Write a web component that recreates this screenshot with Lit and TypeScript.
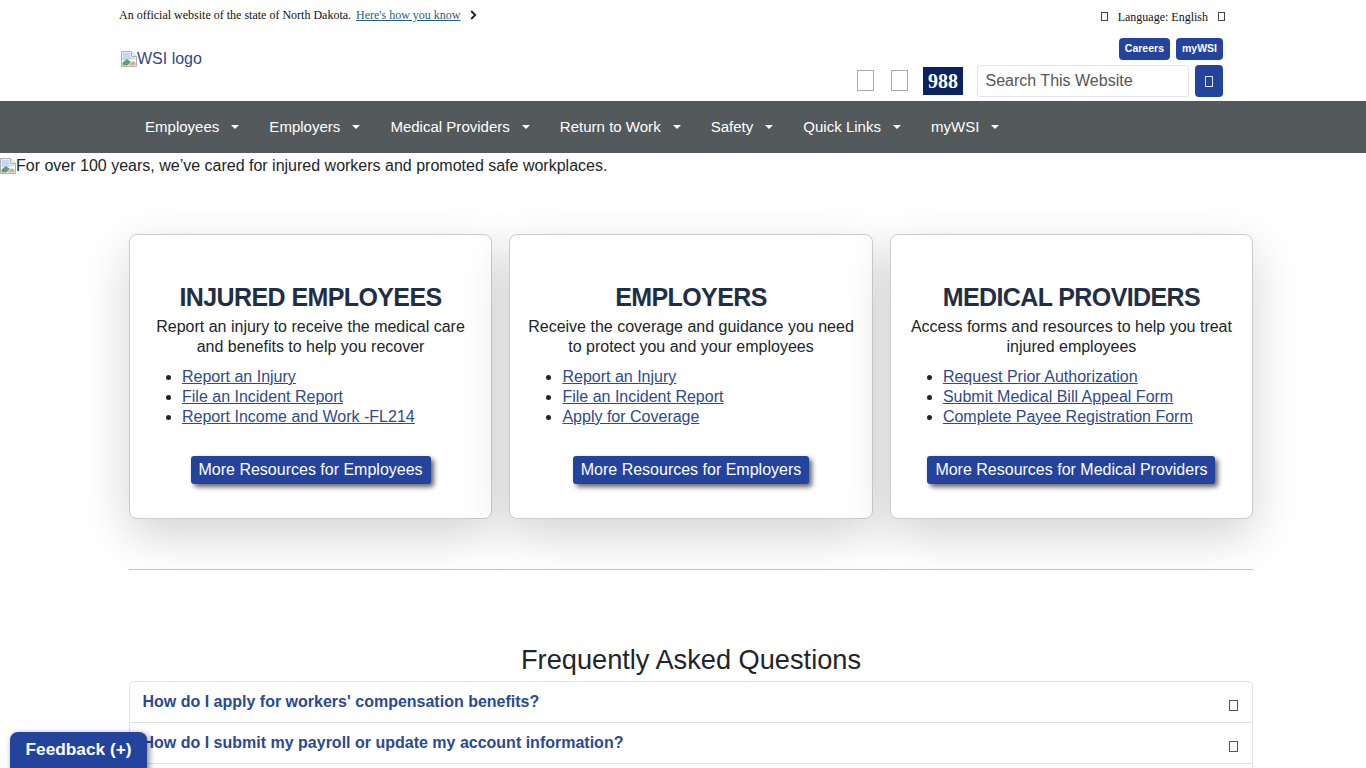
import { LitElement, html, css } from "lit";
import { customElement } from "lit/decorators.js";

const brokenImg = html`<svg class="broken" width="16" height="16" viewBox="0 0 16 16" aria-hidden="true">
  <path d="M0.5 0.5H10.5L15.5 5.5V15.5H0.5Z" fill="#fff" stroke="#b0b0b0"/>
  <path d="M10.5 0.5V5.5H15.5" fill="#eee" stroke="#b0b0b0"/>
  <path d="M1.5 1.5H9.5V6.5H14.5V8L1.5 9.5Z" fill="#c6d6f2"/>
  <path d="M1.5 14.5V11.5L6 8L10 11L6.5 14.5Z" fill="#5aa469"/>
  <path d="M7.5 14.5L11.5 10L14.5 11.5V14.5Z" fill="#d9a79e"/>
</svg>`;

const cards = [
  {
    title: "INJURED EMPLOYEES",
    text: ["Report an injury to receive the medical care", "and benefits to help you recover"],
    links: ["Report an Injury", "File an Incident Report", "Report Income and Work -FL214"],
    btn: "More Resources for Employees",
  },
  {
    title: "EMPLOYERS",
    text: ["Receive the coverage and guidance you need", "to protect you and your employees"],
    links: ["Report an Injury", "File an Incident Report", "Apply for Coverage"],
    btn: "More Resources for Employers",
  },
  {
    title: "MEDICAL PROVIDERS",
    text: ["Access forms and resources to help you treat", "injured employees"],
    links: ["Request Prior Authorization", "Submit Medical Bill Appeal Form", "Complete Payee Registration Form"],
    btn: "More Resources for Medical Providers",
  },
];

const navItems = ["Employees", "Employers", "Medical Providers", "Return to Work", "Safety", "Quick Links", "myWSI"];
const faqs = ["How do I apply for workers' compensation benefits?", "How do I submit my payroll or update my account information?"];

@customElement("app-root")
export class AppRoot extends LitElement {
  static styles = css`
    :host {
      display: block;
      height: 768px;
      overflow: hidden;
      position: relative;
      background: #fff;
      font-family: "Liberation Sans", Arial, sans-serif;
      font-size: 16px;
      line-height: 20px;
      color: #212529;
    }
    a { color: inherit; }
    .header {
      height: 101px;
      box-sizing: border-box;
      padding: 0 143px 0 119px;
      display: grid;
      grid-template-columns: 1fr auto;
    }
    .left { display: flex; flex-direction: column; }
    .official {
      display: flex;
      align-items: center;
      height: 30px;
      font-family: "Liberation Serif", "Times New Roman", serif;
      font-size: 12px;
      color: #111;
    }
    .official a { color: #2b5f80; margin-left: 5px; }
    .chev { margin-left: 9px; }
    .logo {
      display: flex;
      align-items: center;
      margin: 19px 0 0 2px;
      font-size: 16px;
      color: #2f4a8a;
    }
    .broken { flex: none; }
    .right { display: flex; flex-direction: column; align-items: flex-end; }
    .lang {
      display: flex;
      align-items: center;
      height: 32px;
      margin-right: -2px;
      font-family: "Liberation Serif", "Times New Roman", serif;
      font-size: 12px;
      color: #111;
    }
    .lang-text { padding-top: 2px; }
    .tofu {
      display: inline-block;
      box-sizing: border-box;
      width: 7px;
      height: 9px;
      border: 1px solid #444;
    }
    .lang .t1 { margin-right: 10px; }
    .lang .t2 { margin-left: 10px; }
    .tags { display: flex; gap: 6px; margin-top: 6px; }
    .tag {
      background: #24439c;
      color: #fff;
      font-size: 10.5px;
      font-weight: 700;
      height: 22px;
      line-height: 20px;
      padding: 0 6px;
      border-radius: 4px;
    }
    .tools { display: flex; align-items: center; margin-top: 5px; }
    .box {
      box-sizing: border-box;
      width: 17px;
      height: 21px;
      margin-top: -1px;
      border: 1px solid #aaa;
      margin-right: 17px;
    }
    .n988 {
      width: 40px;
      height: 28px;
      background: #0b2260;
      color: #fff;
      font-family: "Liberation Serif", "Times New Roman", serif;
      font-weight: 700;
      font-size: 20px;
      line-height: 29px;
      text-align: center;
      margin: 0 14px 0 -2px;
    }
    .search {
      box-sizing: border-box;
      width: 212px;
      height: 32px;
      border: 1px solid #e3e3e3;
      border-radius: 3px;
      padding-left: 7.5px;
      line-height: 30px;
      color: #555;
    }
    .go {
      width: 28px;
      height: 32px;
      margin-left: 6px;
      background: #24439c;
      border-radius: 4px;
      display: flex;
      align-items: center;
      justify-content: center;
    }
    .go .tofu { border-color: #dfe4f2; width: 8px; height: 11px; }
    nav {
      height: 52px;
      box-sizing: border-box;
      padding-left: 145px;
      background: #54595c;
      display: flex;
      align-items: center;
      color: #fff;
      font-size: 15.04px;
    }
    .nav-item { display: flex; align-items: center; margin-right: 30px; }
    .caret {
      width: 0;
      height: 0;
      margin-left: 12px;
      border-left: 4px solid transparent;
      border-right: 4px solid transparent;
      border-top: 4px solid #fff;
    }
    .hero {
      display: flex;
      align-items: center;
      height: 24px;
      box-sizing: border-box;
      padding-top: 2px;
      color: #212529;
    }
    main { padding: 57px 113px 0 129px; }
    .cards {
      display: grid;
      grid-template-columns: repeat(3, 1fr);
      gap: 17.33px;
    }
    .card {
      box-sizing: border-box;
      height: 285px;
      border: 1px solid #ccc;
      border-radius: 8px;
      background: #fff;
      box-shadow: 0 16px 48px rgba(0, 0, 0, 0.175);
      padding: 47px 8px 0;
      display: flex;
      flex-direction: column;
    }
    h2 {
      margin: 0;
      font-size: 25px;
      line-height: 30px;
      font-weight: 700;
      letter-spacing: -0.6px;
      text-align: center;
      color: #1f2f46;
    }
    .card p { margin: 5px 0 0; text-align: center; }
    ul { margin: 10px 0 0; padding: 0 0 0 44px; color: #212529; }
    ul a { color: #2f4a8a; }
    .btn-wrap { display: flex; justify-content: center; margin-top: 29px; }
    .btn {
      background: #24439c;
      color: #fff;
      height: 28px;
      line-height: 28px;
      padding: 0 8px;
      border-radius: 3px;
      box-shadow: 3px 3px 5px #666;
    }
    hr {
      margin: 50px 0 0;
      border: 0;
      border-top: 1px solid #c4c4c4;
    }
    h3 {
      margin: 72px 0 0;
      font-size: 27.2px;
      line-height: 36px;
      font-weight: 400;
      text-align: center;
      color: #212529;
    }
    .accordion {
      margin-top: 3px;
      border: 1px solid #e2e2e2;
      border-radius: 5px;
    }
    .q {
      box-sizing: border-box;
      height: 41px;
      border-bottom: 1px solid #e2e2e2;
      display: flex;
      align-items: center;
      justify-content: space-between;
      padding: 0 14px 0 12.5px;
      font-weight: 700;
      color: #2b4a90;
    }
    .q .tofu { border-color: #555; width: 9px; height: 11px; margin-top: 6px; }
    .feedback {
      position: absolute;
      left: 10px;
      top: 732px;
      width: 137px;
      height: 44px;
      box-sizing: border-box;
      padding-top: 7px;
      background: #24439c;
      color: #fff;
      font-size: 17.28px;
      font-weight: 700;
      text-align: center;
      border-radius: 8px 8px 0 0;
      box-shadow: 2px 2px 6px rgba(0, 0, 0, 0.5);
    }
  `;

  render() {
    return html`
      <header class="header">
        <div class="left">
          <div class="official">
            <span>An official website of the state of North Dakota.</span>
            <a href="#">Here's how you know</a>
            <svg class="chev" width="7" height="10" viewBox="0 0 7 10"><path d="M1.2 1L5.2 5L1.2 9" fill="none" stroke="#222" stroke-width="1.9"/></svg>
          </div>
          <div class="logo">${brokenImg}<span>WSI logo</span></div>
        </div>
        <div class="right">
          <div class="lang"><span class="tofu t1"></span><span class="lang-text">Language: English</span><span class="tofu t2"></span></div>
          <div class="tags"><span class="tag">Careers</span><span class="tag">myWSI</span></div>
          <div class="tools">
            <span class="box"></span><span class="box"></span>
            <span class="n988">988</span>
            <span class="search">Search This Website</span>
            <span class="go"><span class="tofu"></span></span>
          </div>
        </div>
      </header>
      <nav>
        ${navItems.map((n) => html`<span class="nav-item">${n}<span class="caret"></span></span>`)}
      </nav>
      <div class="hero">${brokenImg}<span>For over 100 years, we’ve cared for injured workers and promoted safe workplaces.</span></div>
      <main>
        <section class="cards">
          ${cards.map(
            (c) => html`<article class="card">
              <h2>${c.title}</h2>
              <p>${c.text[0]}<br />${c.text[1]}</p>
              <ul>${c.links.map((l) => html`<li><a href="#">${l}</a></li>`)}</ul>
              <div class="btn-wrap"><span class="btn">${c.btn}</span></div>
            </article>`
          )}
        </section>
        <hr />
        <h3>Frequently Asked Questions</h3>
        <div class="accordion">
          ${faqs.map((q) => html`<div class="q"><span>${q}</span><span class="tofu"></span></div>`)}
          <div class="q"></div>
        </div>
      </main>
      <div class="feedback">Feedback (+)</div>
    `;
  }
}
